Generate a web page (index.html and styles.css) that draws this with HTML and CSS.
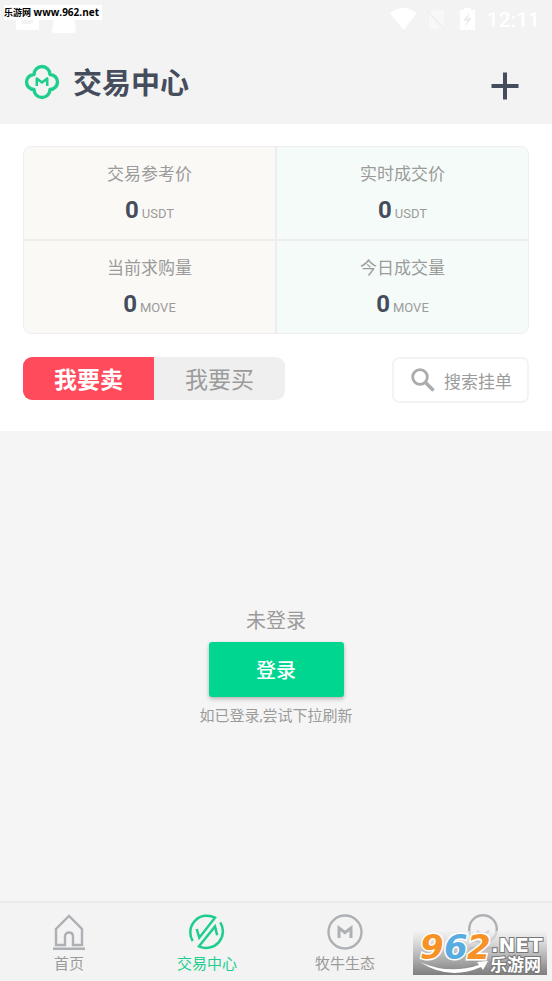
FILE: index.html
```html
<!DOCTYPE html>
<html lang="zh-CN">
<head>
<meta charset="utf-8">
<meta name="viewport" content="width=device-width, initial-scale=1">
<title>交易中心</title>
<link rel="stylesheet" href="styles.css">
</head>
<body>
<header class="top">
  <div class="status">
    <div class="status-left">
      <svg width="24" height="18" viewBox="0 0 24 18"><rect width="23" height="17" rx="2" fill="#fff"/><path d="M5 5h8l5 3-3 3H6z" fill="#f3f3f3"/></svg>
      <svg width="24" height="20" viewBox="0 0 24 20"><path d="M3 0h18l3 16q0 4-3 4H3q-3 0-3-3z" fill="#fff"/></svg>
    </div>
    <div class="status-right">
      <svg width="27" height="22" viewBox="0 0 27 22"><path d="M0 5Q13-5 27 5L13.500 22z" fill="#fff"/></svg>
      <svg class="sim" width="20" height="22" viewBox="0 0 20 22"><path d="M6 2h11v19H2V6z" fill="#f8f8f8"/><path d="M0 3l18 19" stroke="#f0f0f0" stroke-width="2"/></svg>
      <svg class="battery" width="15" height="22" viewBox="0 0 15 22"><path d="M4 0h7v2h4v20H0V2h4z" fill="#fff"/><path d="M9 5l-6 8h4l-2 6 7-9H8z" fill="#ededed"/></svg>
      <span class="clock">12:11</span>
    </div>
  </div>
  <div class="source"><span>乐游网</span> www.962.net</div>
  <div class="titlebar">
    <svg width="36" height="36" viewBox="0 0 36 36" fill="none" stroke="#1dce8c" stroke-linejoin="round"><path d="M10 10.500A8 8 0 0 1 26 10.500A7.500 7.500 0 0 1 26 25.500A8 8 0 0 1 10 25.500A7.500 7.500 0 0 1 10 10.500z" stroke-width="3.400"/><path d="M12.800 22v-7.500l5.200 4 5.200-4V22" stroke-width="2.600"/></svg>
    <h1>交易中心</h1>
    <button class="add" aria-label="添加"><svg width="28" height="28" viewBox="0 0 28 28"><path d="M14 0.500v27M0.500 14h27" stroke="#454d5c" stroke-width="4"/></svg></button>
  </div>
</header>
<main>
  <section class="panel">
    <div class="stats">
      <div class="stat warm"><span class="label">交易参考价</span><p><b>0</b> <small>USDT</small></p></div>
      <div class="stat cool"><span class="label">实时成交价</span><p><b>0</b> <small>USDT</small></p></div>
      <div class="stat warm"><span class="label">当前求购量</span><p><b>0</b> <small>MOVE</small></p></div>
      <div class="stat cool"><span class="label">今日成交量</span><p><b>0</b> <small>MOVE</small></p></div>
    </div>
    <div class="actions">
      <div class="switch"><button class="on">我要卖</button><button>我要买</button></div>
      <button class="search"><svg width="24" height="24" viewBox="0 0 24 24" fill="none" stroke="#a9abad"><circle cx="9" cy="9" r="7.300" stroke-width="2.800"/><path d="M14 14l8.500 8.500" stroke-width="3.500"/></svg>搜索挂单</button>
    </div>
  </section>
  <section class="empty">
    <p class="state">未登录</p>
    <button class="login">登录</button>
    <p class="hint">如已登录,尝试下拉刷新</p>
  </section>
</main>
<nav class="tabs">
  <a href="#"><svg width="36" height="36" viewBox="0 0 36 36" fill="none" stroke="#adb0b4" stroke-width="2.400"><path d="M5 31V15L18 2l13 13v16h-9V22.500q0-4-4-4t-4 4V31zM2 34.800h32"/></svg>首页</a>
  <a href="#" class="active"><svg width="36" height="36" viewBox="0 0 36 36" fill="none" stroke="#1dce8c" stroke-width="2.500"><path d="M3.700 27A16.700 16.700 0 0 1 26 3.700L10.300 23.700 7.700 15M31.300 8.300A16.700 16.700 0 0 1 10 32.300L26 12.500l2.200 8.800"/></svg>交易中心</a>
  <a href="#"><svg width="36" height="36" viewBox="0 0 36 36" fill="none" stroke="#adb0b4"><circle cx="18" cy="18" r="16.500" stroke-width="2.400"/><path d="M12 24V14l6 4.500 6-4.500v10" stroke-width="3"/></svg>牧牛生态</a>
  <a href="#"><svg width="36" height="36" viewBox="0 0 36 36" fill="none" stroke="#adb0b4" stroke-width="2.400"><circle cx="18" cy="15" r="13.800"/><path d="M12 17q6 6 12 0M4 34h28"/></svg>我的</a>
  <svg class="mark" width="134" height="44" viewBox="0 0 134 44">
    <defs><linearGradient id="shade" x2="0" y2="1"><stop stop-color="#f0f0f0" stop-opacity=".6"/><stop offset=".5" stop-color="#b4b4b4" stop-opacity=".85"/><stop offset="1" stop-color="#777" stop-opacity=".95"/></linearGradient></defs>
    <rect width="134" height="44" fill="url(#shade)"/>
    <g class="mark-number"><text x="7" y="28" fill="#f79226">9</text><text x="31" y="28" fill="#58ace0">6</text><text x="54" y="28" fill="#f79226">2</text></g>
    <path d="M7 31Q36 44 66 34l-2-3 11-1-5 9-2-3Q36 50 7 31z" fill="#fff"/>
    <text class="mark-net" x="78" y="21">.NET</text>
    <text class="mark-cn" x="77" y="40">乐游网</text>
  </svg>
</nav>
</body>
</html>
```
FILE: styles.css
```css
* { box-sizing: border-box; }
body {
  margin: 0;
  min-height: 100vh;
  display: flex;
  flex-direction: column;
  background: #f5f5f5;
  color: #9b9b9b;
  font-family: Roboto, "Noto Sans CJK SC", sans-serif;
}
h1, p { margin: 0; }
button { border: 0; padding: 0; background: none; font: inherit; color: inherit; }
svg { display: block; flex: none; }

.top { position: relative; background: #f3f3f3; }
.status { display: flex; justify-content: space-between; height: 40px; padding: 8px 12px 0 16px; }
.status-left { display: flex; gap: 12px; padding-top: 5px; }
.status-right { display: flex; }
.sim { margin-left: 10px; }
.battery { margin-left: 13px; }
.clock { margin-left: 12px; font-size: 21px; line-height: 24px; font-weight: 500; color: #fff; }
.source {
  position: absolute;
  top: 5px;
  left: 4px;
  padding-right: 3px;
  background: #fff;
  color: #000;
  font: bold 10px/14px "Open Sans", "Noto Sans CJK SC", sans-serif;
}
.source span { font-size: 9px; }
.titlebar { display: flex; align-items: center; height: 84px; padding: 0 33px 0 24px; }
.titlebar h1 { margin-left: 13px; padding-top: 4px; font-size: 29px; line-height: 40px; font-weight: 700; color: #454d5c; }
.add { margin: 8px 0 0 auto; }

main { flex: 1; display: flex; flex-direction: column; }
.panel { background: #fff; padding: 22px 23px 28px; }
.stats {
  display: grid;
  grid-template-columns: 1fr 1fr;
  gap: 2px;
  overflow: hidden;
  border: 1px solid #eee;
  border-radius: 8px;
  background: #eee;
}
.stat { padding: 15px 0 11px; text-align: center; }
.warm { background: #faf9f6; }
.cool { background: #f5fbf8; }
.label { display: block; font-size: 17px; line-height: 24px; }
.stat p { margin-top: 10px; line-height: 28px; font-size: 12px; }
.stat b { font-size: 24px; color: #454d5c; }
.stat small { font-size: 13px; }

.actions { display: flex; justify-content: space-between; align-items: flex-start; margin-top: 23px; }
.switch { display: flex; overflow: hidden; border-radius: 9px; background: #efefef; }
.switch button { width: 131px; height: 43px; padding-top: 5px; font-size: 23px; line-height: 38px; }
.switch .on { background: #ff4b5c; color: #fff; font-weight: 700; }
.search {
  display: flex;
  align-items: center;
  gap: 9px;
  height: 46px;
  padding: 0 15px 0 17px;
  border: 2px solid #f3f3f3;
  border-radius: 7px;
  font-size: 17px;
}

.empty { flex: 1; display: flex; flex-direction: column; align-items: center; justify-content: center; padding-top: 2px; }
.state { font-size: 20px; line-height: 30px; }
.login {
  width: 135px;
  height: 55px;
  margin: 6px 0;
  border-radius: 3px;
  background: #00d68f;
  box-shadow: 0 2px 4px #0004;
  color: #fff;
  font-size: 20px;
  font-weight: 500;
}
.hint { font-size: 15px; line-height: 26px; }

.tabs { position: relative; display: flex; border-top: 2px solid #eaeaea; background: #f3f3f3; }
.tabs a {
  flex: 1;
  display: flex;
  flex-direction: column;
  align-items: center;
  padding: 11px 0 3px;
  color: #9b9b9b;
  font-size: 15px;
  line-height: 28px;
  text-decoration: none;
}
.tabs .active { color: #1dce8c; }
.mark { position: absolute; right: 5px; bottom: 6px; }
.mark-number {
  font: italic 700 34px "DejaVu Sans", sans-serif;
  stroke: #fff;
  stroke-width: 3px;
  paint-order: stroke;
}
.mark-net { font: 700 20px "DejaVu Sans", sans-serif; fill: #fff; stroke: #777; stroke-width: 2px; paint-order: stroke; }
.mark-cn { font: 700 17px "Noto Sans CJK SC", sans-serif; fill: #fff; stroke: #777; stroke-width: 2px; paint-order: stroke; }
```
